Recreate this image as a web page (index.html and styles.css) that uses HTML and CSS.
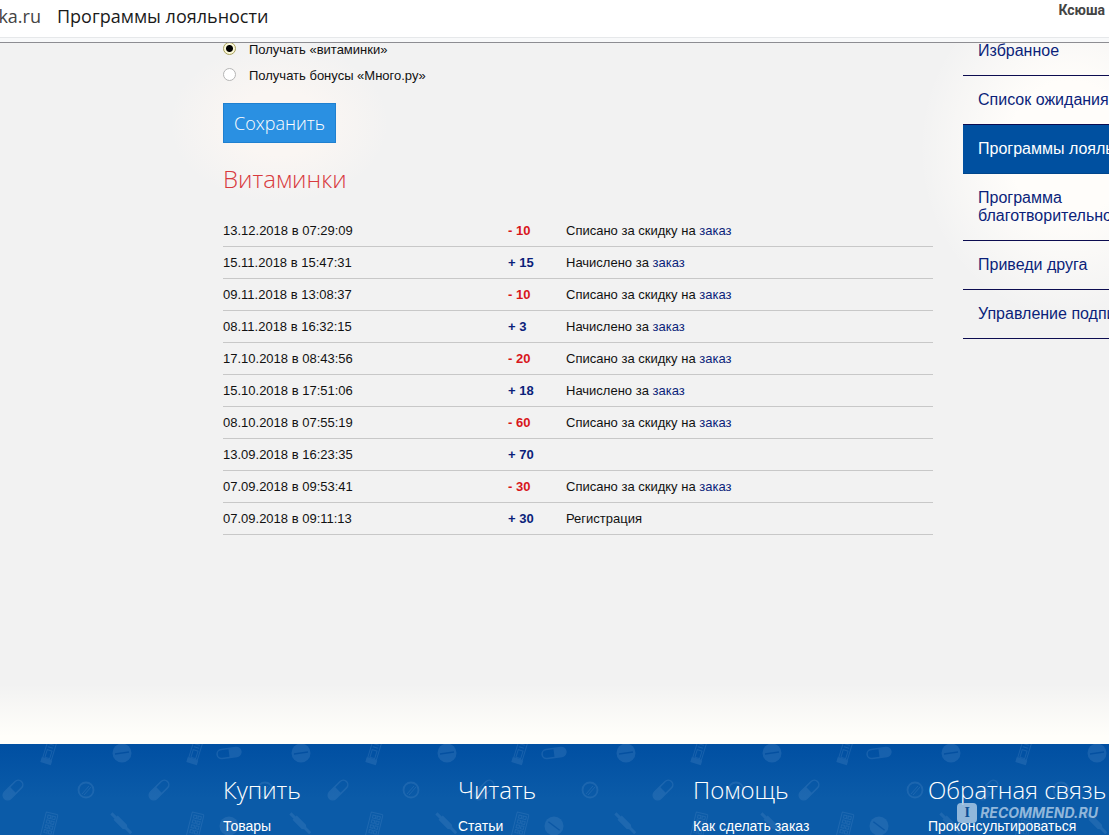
FILE: index.html
```html
<!DOCTYPE html>
<html lang="ru">
<head>
<meta charset="utf-8">
<title>Программы лояльности</title>
<link rel="stylesheet" href="styles.css">
</head>
<body>
<header class="topbar">
  <span class="domain"><span>apteka.ru</span></span>
  <span class="page-title">Программы лояльности</span>
  <span class="user">Ксюша</span>
</header>
<div class="page">
  <main class="content">
    <form class="program">
      <label class="option"><input class="radio" type="radio" name="program" checked><span>Получать «витаминки»</span></label>
      <label class="option"><input class="radio" type="radio" name="program"><span>Получать бонусы «Много.ру»</span></label>
      <button class="save" type="button">Сохранить</button>
    </form>
    <h1 class="heading">Витаминки</h1>
    <table class="history">
      <tbody>
        <tr><td class="date">13.12.2018 в 07:29:09</td><td class="sum minus">- 10</td><td>Списано за скидку на <a href="#">заказ</a></td></tr>
        <tr><td class="date">15.11.2018 в 15:47:31</td><td class="sum">+ 15</td><td>Начислено за <a href="#">заказ</a></td></tr>
        <tr><td class="date">09.11.2018 в 13:08:37</td><td class="sum minus">- 10</td><td>Списано за скидку на <a href="#">заказ</a></td></tr>
        <tr><td class="date">08.11.2018 в 16:32:15</td><td class="sum">+ 3</td><td>Начислено за <a href="#">заказ</a></td></tr>
        <tr><td class="date">17.10.2018 в 08:43:56</td><td class="sum minus">- 20</td><td>Списано за скидку на <a href="#">заказ</a></td></tr>
        <tr><td class="date">15.10.2018 в 17:51:06</td><td class="sum">+ 18</td><td>Начислено за <a href="#">заказ</a></td></tr>
        <tr><td class="date">08.10.2018 в 07:55:19</td><td class="sum minus">- 60</td><td>Списано за скидку на <a href="#">заказ</a></td></tr>
        <tr><td class="date">13.09.2018 в 16:23:35</td><td class="sum">+ 70</td><td></td></tr>
        <tr><td class="date">07.09.2018 в 09:53:41</td><td class="sum minus">- 30</td><td>Списано за скидку на <a href="#">заказ</a></td></tr>
        <tr><td class="date">07.09.2018 в 09:11:13</td><td class="sum">+ 30</td><td>Регистрация</td></tr>
      </tbody>
    </table>
  </main>
  <nav class="side">
    <a class="side-link first" href="#">Избранное</a>
    <a class="side-link" href="#">Список ожидания</a>
    <a class="side-link active" href="#">Программы лояльности</a>
    <a class="side-link" href="#">Программа<br>благотворительности</a>
    <a class="side-link" href="#">Приведи друга</a>
    <a class="side-link" href="#">Управление подписками</a>
  </nav>
</div>
<footer class="footer">
  <svg class="pills" width="100%" height="100%" aria-hidden="true">
    <defs>
      <g id="tube" transform="rotate(17)">
        <path d="M-4-14H5V5H-4zM-2-10H3M-2-7H3" fill="none" stroke="#4a86c4"/>
        <path d="M-5 5H6V10H-5z" fill="#4a86c4"/>
        <path d="M-2-4H3V4H-2z" fill="none" stroke="#4a86c4"/>
      </g>
      <g id="tablet">
        <circle r="9.500" fill="#4a86c4"/>
        <path d="M-7 1L7-1" stroke="#0a4f9e" stroke-width="1.500"/>
      </g>
      <g id="capsule">
        <rect x="-12" y="-4.500" width="24" height="9" rx="4.500" fill="none" stroke="#4a86c4" stroke-width="1.500"/>
        <path d="M0-4.500H7.500A4.500 4.500 0 0 1 7.500 4.500H0z" fill="#4a86c4"/>
      </g>
      <g id="ring" fill="none" stroke="#4a86c4">
        <circle r="7.500" stroke-width="1.800"/>
        <path d="M-4 4L3-4M-2 5L5-3"/>
      </g>
      <g id="blister" transform="rotate(14)" fill="none" stroke="#4a86c4">
        <rect x="-6" y="-13" width="12" height="26" rx="1"/>
        <path d="M-3.500-10.500H-.5V-7.500H-3.500zM1-10.500H4V-7.500H1zM-3.500-5.500H-.5V-2.500H-3.500zM1-5.500H4V-2.500H1zM-3.500-.5H-.5V2.500H-3.500zM1-.5H4V2.500H1zM-3.500 4.500H-.5V7.500H-3.500zM1 4.500H4V7.500H1z"/>
      </g>
      <g id="pen" transform="rotate(-45)" fill="#4a86c4">
        <path d="M-1.500-15H1.500V-9H3V4L1.500 6V13H-1.500V6L-3 4V-9H-1.500z"/>
      </g>
      <pattern id="pattern" width="325" height="146" patternUnits="userSpaceOnUse">
        <use href="#tube" x="48" y="10"/><use href="#tube" x="194" y="10"/>
        <use href="#tablet" x="122" y="9"/><use href="#tablet" x="301" y="9"/>
        <g transform="translate(229 9) rotate(-8)"><use href="#capsule"/></g>
        <g transform="translate(13 46) rotate(135)"><use href="#capsule"/></g>
        <g transform="translate(159 46) rotate(135)"><use href="#capsule"/></g>
        <use href="#ring" x="86" y="46"/><use href="#ring" x="265" y="46"/>
        <g transform="translate(49 82)"><use href="#blister"/></g>
        <g transform="translate(195 82)"><use href="#blister"/></g>
        <g transform="translate(122 80)"><use href="#pen"/></g>
        <g transform="translate(301 80)"><use href="#pen"/></g>
        <g transform="translate(229 82) rotate(45)"><use href="#tablet"/></g>
      </pattern>
    </defs>
    <rect width="100%" height="100%" fill="url(#pattern)"/>
  </svg>
  <div class="footer-grid">
    <section><h2 class="footer-title">Купить</h2><a class="footer-link" href="#">Товары</a></section>
    <section><h2 class="footer-title">Читать</h2><a class="footer-link" href="#">Статьи</a></section>
    <section><h2 class="footer-title">Помощь</h2><a class="footer-link" href="#">Как сделать заказ</a></section>
    <section><h2 class="footer-title">Обратная связь</h2><a class="footer-link" href="#">Проконсультироваться</a></section>
  </div>
  <div class="watermark"><span class="mark">I</span><span class="mark-text">RECOMMEND.RU</span></div>
</footer>
</body>
</html>
```
FILE: styles.css
```css
* { box-sizing: border-box; }

body {
  margin: 0;
  min-height: 100vh;
  display: flex;
  flex-direction: column;
  overflow: hidden;
  background: #f2f2f2;
  color: #111;
  font: 13px/18px "Liberation Sans", Arial, sans-serif;
}

a { color: #0b1f7a; text-decoration: none; }

.topbar {
  position: relative;
  z-index: 1;
  display: flex;
  height: 43px;
  padding: 3px 4px 0 0;
  background: linear-gradient(#fff 37px, #e6e8ea 37px, #e6e8ea 38px, #f8f9fa 38px);
  border-bottom: 1px solid #8d8d92;
  color: #1a1a1a;
  font: 18px/26px "Open Sans", "Noto Sans", sans-serif;
  white-space: nowrap;
}

.domain {
  display: flex;
  justify-content: flex-end;
  width: 41px;
  margin-right: 16px;
  overflow: hidden;
  color: #444;
}

.user {
  margin-left: auto;
  color: #444;
  font: bold 14px/14px Roboto, sans-serif;
}

.page {
  flex: 1;
  display: grid;
  grid-template-columns: minmax(0, 1fr) 146px;
  gap: 30px;
  align-items: start;
  padding-left: 223px;
  background:
    linear-gradient(rgba(255, 254, 250, 0) calc(100% - 60px), #fffefa calc(100% - 8px)),
    radial-gradient(ellipse 150px 170px at 1069px 106px, #fffdfa 40%, rgba(255, 253, 250, 0)),
    radial-gradient(ellipse 110px 80px at 279px 80px, #faf6f3 40%, rgba(250, 246, 243, 0)),
    #f2f2f2;
}

.program {
  display: flex;
  flex-direction: column;
  align-items: flex-start;
  margin-top: -1px;
}

.option {
  display: flex;
  align-items: flex-start;
  gap: 13px;
  height: 26px;
}

.option span { line-height: 16px; }

.radio {
  appearance: none;
  width: 13px;
  height: 13px;
  margin: 0;
  border: 1px solid #b5b5b5;
  border-radius: 50%;
  background: #fff;
}

.radio:checked {
  border-color: #a8a05a;
  background: radial-gradient(circle, #000 3px, #fbf8d8 4px);
}

.save {
  height: 40px;
  margin-top: 9px;
  padding: 0 10px;
  border: 1px solid #1f80d0;
  background: #2a90e2;
  color: #fff;
  font: 300 18px/36px "Open Sans", sans-serif;
}

.heading {
  margin: 19px 0;
  color: #d83a3e;
  font: 300 24px/33px "Open Sans", sans-serif;
}

.history {
  width: 100%;
  border-collapse: collapse;
  table-layout: fixed;
}

.history td {
  height: 32px;
  padding: 2px 0 0;
  border-bottom: 1px solid #c8c8c8;
}

.history .date { width: 285px; }

.history .sum {
  width: 58px;
  color: #0b1f7a;
  font-weight: bold;
}

.history .minus { color: #d8161b; }

.side {
  overflow: hidden;
  margin-top: -1px;
  font-size: 16px;
  white-space: nowrap;
}

.side-link {
  display: block;
  padding: 15px;
  border-bottom: 1px solid #0c0c50;
}

.side-link.first { padding-top: 0; }

.side-link.active {
  border-color: #00468c;
  background: #0050a0;
  color: #fff;
}

.footer {
  position: relative;
  height: 91px;
  padding-left: 223px;
  background: linear-gradient(#004fa2, #0b5ba8 60%);
  overflow: hidden;
}

.pills {
  position: absolute;
  inset: 0;
  opacity: 0.3;
}

.footer-grid {
  position: relative;
  display: grid;
  grid-template-columns: repeat(4, 235px);
  padding-top: 29px;
  white-space: nowrap;
}

.footer-title {
  margin: 0 0 11px;
  color: #fff;
  font: 300 24px/33px "Open Sans", sans-serif;
}

.footer-link { color: #fff; font-size: 14px; }

.watermark {
  position: absolute;
  right: 11px;
  bottom: 12px;
  display: flex;
  align-items: center;
  gap: 3px;
  color: #a9c8e4;
  font: italic bold 14px/20px Inter, sans-serif;
  opacity: 0.85;
}

.mark {
  width: 20px;
  border-radius: 4px;
  background: #a9c8e4;
  color: #0b4c92;
  font-family: "Liberation Serif", serif;
  font-style: normal;
  text-align: center;
}
```
